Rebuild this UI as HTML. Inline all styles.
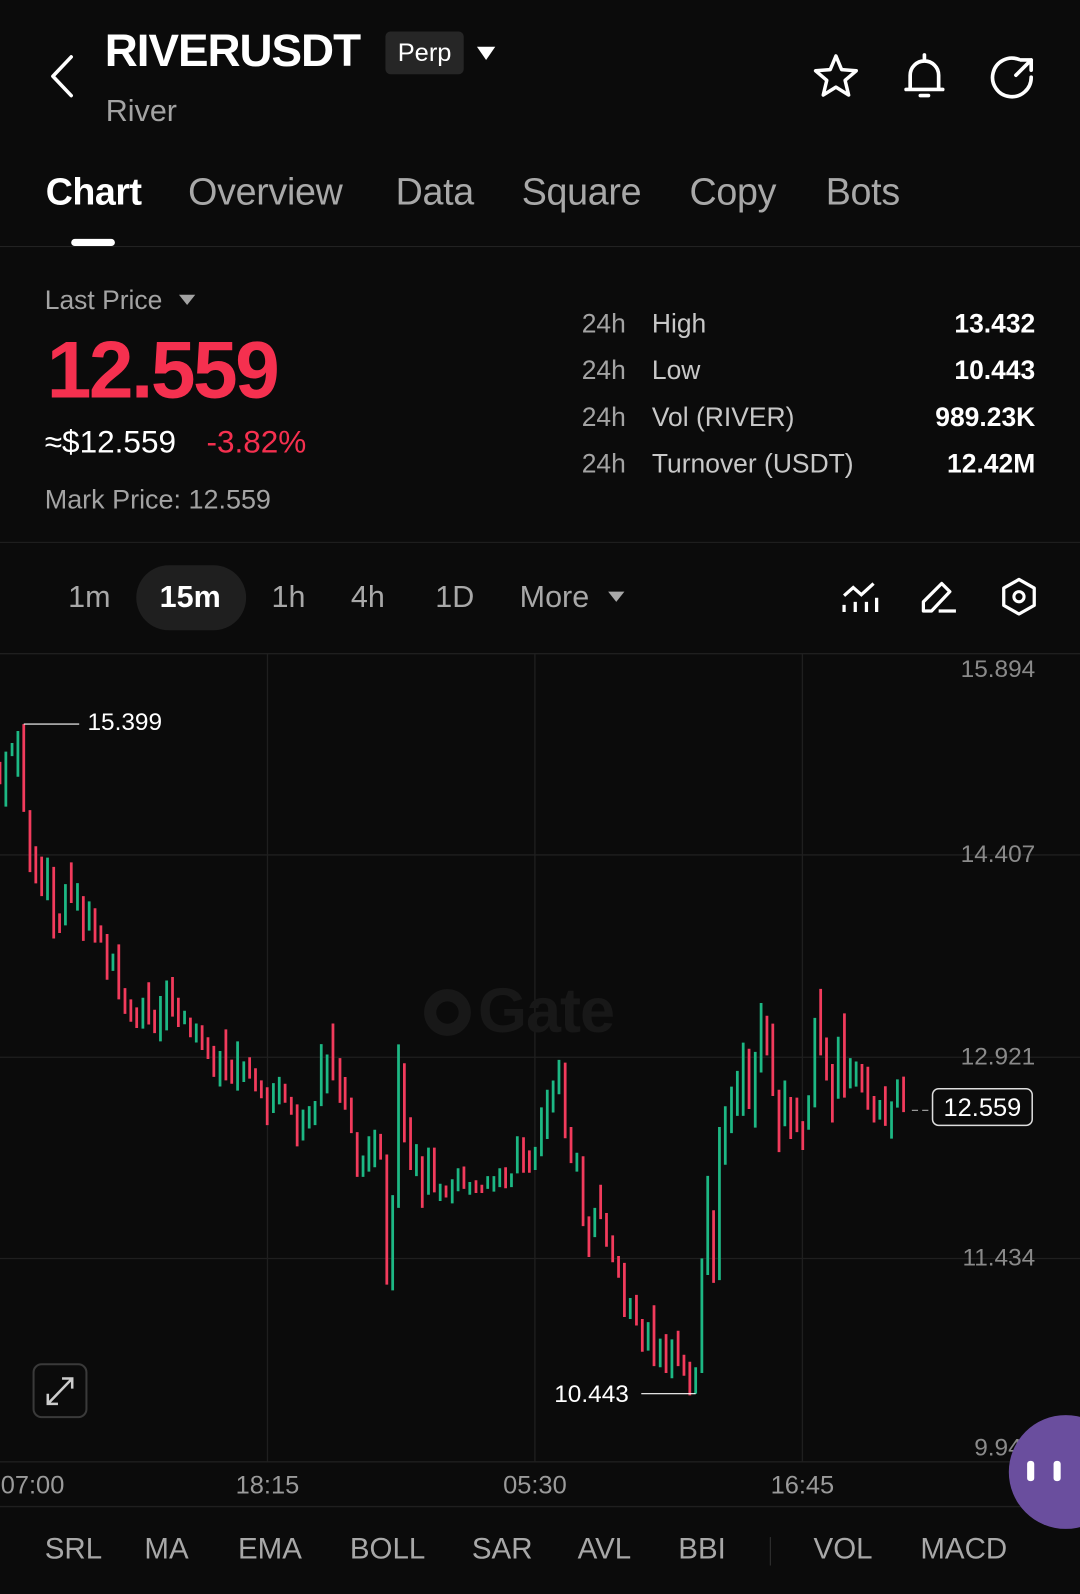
<!DOCTYPE html>
<html><head><meta charset="utf-8">
<style>
html,body{margin:0;padding:0;background:#0b0b0b;overflow:hidden;width:1080px;height:1594px}
#w{position:absolute;left:0;top:0;width:1062px;height:1568px;transform:scale(1.01695,1.01658);transform-origin:0 0;font-family:"Liberation Sans",sans-serif;color:#fff;background:#0b0b0b}
.a{position:absolute;white-space:nowrap}
.g{color:#a3a3a3}
</style></head><body><div id="w">
<!-- header -->
<svg class="a" style="left:40px;top:50px" width="40" height="50"><path d="M30 6 L12 25 L30 44" fill="none" stroke="#fff" stroke-width="3.5" stroke-linecap="round" stroke-linejoin="round"/></svg>
<div class="a" style="left:103px;top:24px;font-size:45px;font-weight:bold;letter-spacing:-1px">RIVERUSDT</div>
<div class="a" style="left:379px;top:31px;width:77px;height:42px;background:#262626;border-radius:5px;font-size:25px;line-height:42px;text-align:center">Perp</div>
<svg class="a" style="left:468px;top:45px" width="22" height="16"><path d="M1 1H19L10 14Z" fill="#fff"/></svg>
<div class="a g" style="left:104px;top:93px;font-size:30px">River</div>
<svg class="a" style="left:796px;top:50px" width="52" height="50" viewBox="0 0 52 50"><path d="M26 5 L31.6 18.5 L46 19.6 L35 29 L38.5 43.5 L26 35.7 L13.5 43.5 L17 29 L6 19.6 L20.4 18.5Z" fill="none" stroke="#fff" stroke-width="3.4" stroke-linejoin="round"/></svg>
<svg class="a" style="left:886px;top:50px" width="46" height="52" viewBox="0 0 46 52"><path d="M9 38 V24 A14 14 0 0 1 37 24 V38 M5 38 H41 M23 4 V9 M19 44 H27" fill="none" stroke="#fff" stroke-width="3.6" stroke-linecap="round"/></svg>
<svg class="a" style="left:972px;top:52px" width="50" height="50" viewBox="0 0 50 50"><path d="M30 6.5 A19 19 0 1 0 42 24" fill="none" stroke="#fff" stroke-width="3.6" stroke-linecap="round"/><path d="M27 22 L42 7 M32 7 H42 V17" fill="none" stroke="#fff" stroke-width="3.6" stroke-linecap="round" stroke-linejoin="round"/></svg>
<!-- tabs -->
<div class="a" style="left:45px;top:168px;font-size:37px;font-weight:bold;letter-spacing:-0.5px">Chart</div>
<div class="a" style="left:185px;top:168px;font-size:37px;color:#a8a8a8;letter-spacing:-0.3px">Overview</div>
<div class="a" style="left:389px;top:168px;font-size:37px;color:#a8a8a8;letter-spacing:-0.3px">Data</div>
<div class="a" style="left:513px;top:168px;font-size:37px;color:#a8a8a8;letter-spacing:-0.3px">Square</div>
<div class="a" style="left:678px;top:168px;font-size:37px;color:#a8a8a8;letter-spacing:-0.3px">Copy</div>
<div class="a" style="left:812px;top:168px;font-size:37px;color:#a8a8a8;letter-spacing:-0.3px">Bots</div>
<div class="a" style="left:70px;top:235px;width:43px;height:7px;background:#fff;border-radius:4px"></div>
<div class="a" style="left:0;top:242px;width:1062px;height:1px;background:#222"></div>
<!-- price -->
<div class="a g" style="left:44px;top:280px;font-size:26px">Last Price</div>
<svg class="a" style="left:175px;top:289px" width="18" height="12"><path d="M1 1H17L9 11Z" fill="#a3a3a3"/></svg>
<div class="a" style="left:46px;top:318px;font-size:79px;font-weight:bold;color:#f5304f;letter-spacing:-2.5px">12.559</div>
<div class="a" style="left:44px;top:417px;font-size:31px">≈$12.559</div>
<div class="a" style="left:203px;top:417px;font-size:31px;color:#f5304f">-3.82%</div>
<div class="a g" style="left:44px;top:476px;font-size:26.5px">Mark Price: 12.559</div>
<div class="a g" style="left:572px;top:295px;font-size:26px;line-height:46px">24h<br>24h<br>24h<br>24h</div>
<div class="a" style="left:641px;top:295px;font-size:26px;line-height:46px;color:#c8c8c8">High<br>Low<br>Vol (RIVER)<br>Turnover (USDT)</div>
<div class="a" style="left:860px;top:295px;width:158px;text-align:right;font-size:26px;line-height:46px;font-weight:bold">13.432<br>10.443<br>989.23K<br>12.42M</div>
<div class="a" style="left:0;top:533px;width:1062px;height:1px;background:#222"></div>
<!-- timeframe -->
<div class="a" style="left:134px;top:556px;width:108px;height:64px;background:#1f1f1f;border-radius:32px"></div>
<div class="a" style="left:67px;top:571px;font-size:30px;color:#a8a8a8">1m</div>
<div class="a" style="left:157px;top:571px;font-size:30px;font-weight:bold">15m</div>
<div class="a" style="left:267px;top:571px;font-size:30px;color:#a8a8a8">1h</div>
<div class="a" style="left:345px;top:571px;font-size:30px;color:#a8a8a8">4h</div>
<div class="a" style="left:428px;top:571px;font-size:30px;color:#a8a8a8">1D</div>
<div class="a" style="left:511px;top:571px;font-size:30px;color:#a8a8a8">More</div>
<svg class="a" style="left:597px;top:581px" width="18" height="12"><path d="M1 1H17L9 11Z" fill="#a8a8a8"/></svg>
<svg class="a" style="left:826px;top:570px" width="40" height="36" viewBox="0 0 40 36"><path d="M4 16 L13 8 L21 15 L33 4 M4 25 V32 M15 22 V32 M26 22 V32 M36 18 V32" fill="none" stroke="#fff" stroke-width="3.2"/></svg>
<svg class="a" style="left:904px;top:568px" width="40" height="38" viewBox="0 0 40 38"><path d="M4 33 V24 L22 6 L30 14 L12 33 Z M19 33 H36" fill="none" stroke="#fff" stroke-width="3.2" stroke-linejoin="round"/></svg>
<svg class="a" style="left:982px;top:567px" width="40" height="40" viewBox="0 0 40 40"><path d="M20 3 L35 11.5 V28.5 L20 37 L5 28.5 V11.5Z" fill="none" stroke="#fff" stroke-width="3.2" stroke-linejoin="round"/><circle cx="20" cy="20" r="5" fill="none" stroke="#fff" stroke-width="3"/></svg>
<!-- chart -->
<svg class="a" style="left:0;top:0" width="1062" height="1568">
<g stroke="#1f1f1f" stroke-width="1.3">
<path d="M0 643H1062 M0 841H1062 M0 1040H1062 M0 1238H1062 M0 1438H1062 M0 1482H1062 M263 643V1438 M526 643V1438 M789 643V1438"/>
</g>
<text x="470" y="1015" font-family="Liberation Sans,sans-serif" font-size="62" font-weight="bold" fill="#181818" letter-spacing="-1">Gate</text>
<circle cx="440" cy="996" r="17" fill="none" stroke="#181818" stroke-width="12"/>
<g font-family="Liberation Sans,sans-serif" font-size="24" fill="#8a8a8a" text-anchor="end">
<text x="1018" y="666">15.894</text><text x="1018" y="848">14.407</text><text x="1018" y="1047">12.921</text><text x="1018" y="1245">11.434</text><text x="1018" y="1432">9.947</text>
</g>
<g font-family="Liberation Sans,sans-serif" font-size="25" fill="#9a9a9a" text-anchor="middle">
<text x="32" y="1469">07:00</text><text x="263" y="1469">18:15</text><text x="526" y="1469">05:30</text><text x="789" y="1469">16:45</text>
</g>
<g fill="none" stroke-width="8">
<g transform="scale(0.98328) translate(0,640) scale(0.34435)">
<path stroke="#f23b5c" d="M0 355V420M69 245V500M87 495V675M104 600V708M121 630V745M156 660V868M173 795V852M207 647V765M242 745V875M276 780V880M293 830V880M311 855V988M345 885V1045M363 1012V1087M380 1045V1110M397 1068V1128M432 995V1118M449 1075V1143M501 980V1095M518 1040V1125M553 1098V1155M587 1120V1192M604 1155V1218M621 1180V1270M656 1132V1280M673 1220V1290M725 1213V1275M742 1245V1312M759 1280V1332M776 1300V1410M828 1290V1345M846 1328V1380M863 1350V1472M967 1115V1280"/>
<path stroke="#1db884" d="M17 325V485M35 300V338M52 265V398M138 633V757M190 710V830M225 707V787M259 760V845M328 912V962M415 1040V1130M466 1035V1167M484 990V1135M536 1078V1117M570 1115V1170M639 1195V1298M690 1167V1310M708 1225V1285M794 1288V1375M811 1270V1350M880 1365V1455M898 1355V1420M915 1340V1410M933 1175V1355M950 1205V1318"/>
<path stroke="#fff" stroke-width="3.5" d="M69 245H230"/>
</g>
<g transform="scale(0.98328) translate(340,1000) scale(0.34435)">
<path stroke="#f23b5c" d="M0 170V300M15 225V320M33 285V388M50 385V515M118 390V465M136 450V828M187 185V415M205 342V495M239 455V605M274 430V560M308 540V575M360 485V550M395 525V562M412 538V562M481 487V548M533 400V503M550 438V503M654 183V403M671 370V475M706 455V658M723 630V748M757 538V638M774 620V718M792 685V763M809 745V808M826 765V922M861 858V947M878 928V1023M912 888V1065M947 972V1085M982 962V1065M999 1032V1093M1016 1052V1150M1085 612V823M1188 143V318M1240 47V162M1257 70V280M1275 262V443M1309 283V405M1327 285V385M1344 353V437M1396 -31V162M1413 110V235M1430 187V357M1465 40V285M1516 187V270M1533 195V320M1551 280V357"/>
<path stroke="#1db884" d="M67 453V515M84 397V500M101 378V487M153 568V845M170 130V605M222 420V513M257 430V567M291 535V585M326 522V592M343 490V557M377 530V567M429 513V550M447 513V558M464 490V545M498 505V545M515 397V505M567 428V495M585 313V455M602 262V405M619 235V328M636 175V275M688 445V500M740 605V690M843 867V928M895 937V1020M930 985V1068M964 987V1100M1033 1068V1145M1051 752V1085M1068 512V800M1102 370V815M1119 310V480M1137 253V388M1154 207V338M1171 125V338M1206 152V372M1223 10V212M1292 235V368M1361 278V378M1379 53V313M1447 108V288M1482 170V258M1499 180V253"/>
<path stroke="#fff" stroke-width="3.5" d="M875 1145H1033"/>
</g>
<g transform="scale(0.98328) translate(540,960) scale(0.34435)">
<path stroke="#f23b5c" d="M1003 368V483M1056 340V443"/>
<path stroke="#1db884" d="M987 408V465M1021 412V520M1038 348V430"/>
<path stroke="#999" stroke-width="3.5" stroke-dasharray="18 12" d="M1080 438H1135"/>
</g>
</g>
<text x="86" y="718" font-family="Liberation Sans,sans-serif" font-size="24" fill="#fff">15.399</text>
<text x="545" y="1379" font-family="Liberation Sans,sans-serif" font-size="24" fill="#fff">10.443</text>
<rect x="917" y="1071" width="98" height="36" rx="6" fill="#0b0b0b" stroke="#ddd" stroke-width="1.5"/>
<text x="966" y="1098" font-family="Liberation Sans,sans-serif" font-size="25" fill="#fff" text-anchor="middle">12.559</text>
<rect x="33" y="1342" width="52" height="52" rx="8" fill="none" stroke="#3a3a3a" stroke-width="2"/>
<path d="M47 1381 L71 1356 M61 1356H71V1366 M47 1371V1381H57" fill="none" stroke="#ccc" stroke-width="2.5"/>
<circle cx="1048" cy="1448" r="56" fill="#6a4e9e"/>
<rect x="1010" y="1437" width="7" height="20" rx="3" fill="#fff"/><rect x="1036" y="1437" width="7" height="20" rx="3" fill="#fff"/>
</svg>
<!-- indicators -->
<div class="a" style="left:0;top:1508px;width:1062px;font-size:29px;color:#a8a8a8">
<span class="a" style="left:44px">SRL</span><span class="a" style="left:142px">MA</span><span class="a" style="left:234px">EMA</span><span class="a" style="left:344px">BOLL</span><span class="a" style="left:464px">SAR</span><span class="a" style="left:568px">AVL</span><span class="a" style="left:667px">BBI</span><span class="a" style="left:800px">VOL</span><span class="a" style="left:905px">MACD</span>
</div>
<div class="a" style="left:757px;top:1512px;width:1px;height:28px;background:#333"></div>
</div></body></html>
